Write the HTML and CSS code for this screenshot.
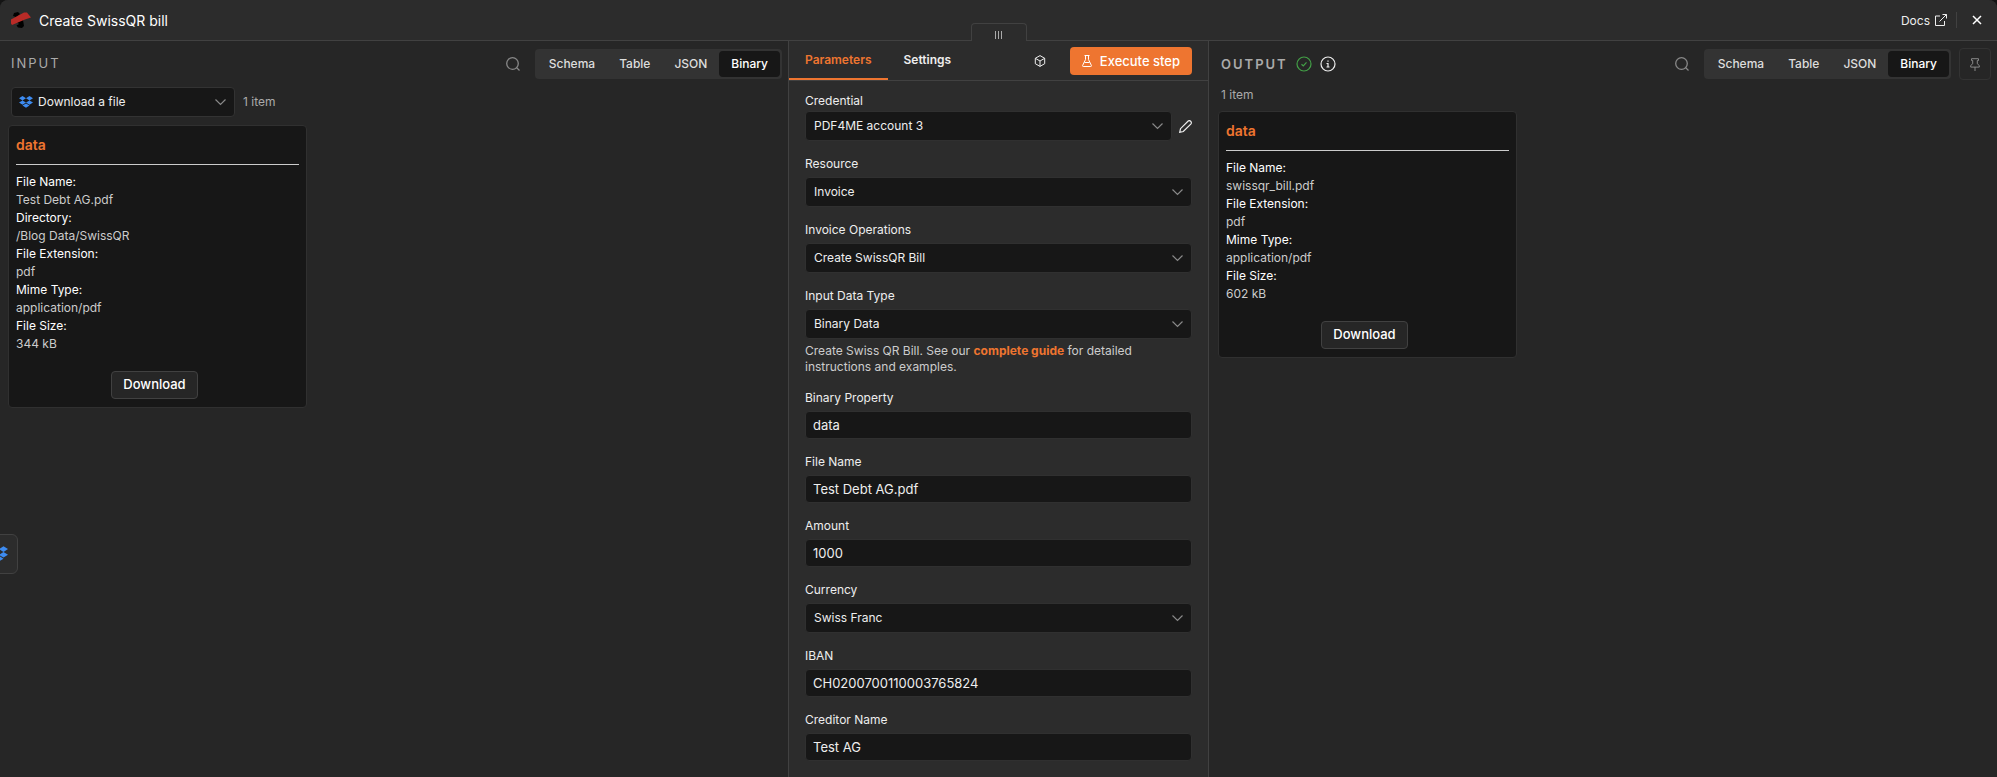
FILE: index.html
```html
<!DOCTYPE html>
<html lang="en">
<head>
    <meta charset="UTF-8">
    <meta name="viewport" content="width=device-width, initial-scale=1.0">
    <title>Create SwissQR bill</title>
    <link rel="stylesheet" href="styles.css">
</head>
<body>
    <div class="dialog">
        <header class="topbar">
            <svg class="logo" width="22" height="18" viewBox="0 0 22 18">
                <path d="M4 2l4-1 2 2-4 3-3-1zM7 11l6-2 1 6-2 2-4-.5-1.500-2L9 13z" fill="#000"/>
                <path d="M1 8.500L14 1.500h3l4 5-6 2L2 14l-1-1.500z" fill="#b92b27"/>
            </svg>
            <h1>Create SwissQR bill</h1>
            <a class="docs" href="#">Docs
                <svg width="12" height="12" viewBox="0 0 12 12" fill="none" stroke="currentColor">
                    <path d="M5 2H.5v9.500h9V7M7.500.5h4v4M11.500.5L4.500 7.500"/>
                </svg>
            </a>
            <button class="close" type="button" aria-label="Close">
                <svg width="10" height="10" viewBox="0 0 10 10" stroke="currentColor" stroke-width="1.500"><path d="M1 1l8 8M9 1L1 9"/></svg>
            </button>
            <div class="drag-handle"><span></span><span></span><span></span></div>
        </header>

        <main class="panels">
            <section class="panel">
                <div class="panel-header">
                    <h2>INPUT</h2>
                    <button class="search" type="button" aria-label="Search">
                        <svg width="14" height="14" viewBox="0 0 14 14" fill="none" stroke="currentColor" stroke-width="1.300"><circle cx="6.500" cy="6.500" r="5.800"/><path d="M10.500 10.500l3 3"/></svg>
                    </button>
                    <div class="view-tabs">
                        <button type="button">Schema</button>
                        <button type="button">Table</button>
                        <button type="button">JSON</button>
                        <button type="button" class="active">Binary</button>
                    </div>
                </div>
                <div class="source">
                    <div class="source-select">
                        <svg width="14" height="12" viewBox="0 0 14 12" fill="#3d8bf0"><path d="M3.500 0L7 2.200 3.500 4.400 0 2.200zM10.500 0L14 2.200l-3.500 2.200L7 2.200zM0 6.600l3.500-2.200L7 6.600 3.500 8.800zM10.500 4.400L14 6.600l-3.500 2.200L7 6.600zM3.500 9.600L7 7.400l3.500 2.200L7 11.800z"/></svg>
                        <select class="control" aria-label="Input node"><option>Download a file</option></select>
                    </div>
                    <span class="count">1 item</span>
                </div>
                <article class="card">
                    <h3>data</h3>
                    <dl>
                        <dt>File Name:</dt>
                        <dd>Test Debt AG.pdf</dd>
                        <dt>Directory:</dt>
                        <dd>/Blog Data/SwissQR</dd>
                        <dt>File Extension:</dt>
                        <dd>pdf</dd>
                        <dt>Mime Type:</dt>
                        <dd>application/pdf</dd>
                        <dt>File Size:</dt>
                        <dd>344 kB</dd>
                    </dl>
                    <div class="card-footer">
                        <button class="download" type="button">Download</button>
                    </div>
                </article>
                <button class="floating-node" type="button" aria-label="Download a file">
                    <svg width="18" height="16" viewBox="0 0 14 12" fill="#3d8bf0"><path d="M3.500 0L7 2.200 3.500 4.400 0 2.200zM10.500 0L14 2.200l-3.500 2.200L7 2.200zM0 6.600l3.500-2.200L7 6.600 3.500 8.800zM10.500 4.400L14 6.600l-3.500 2.200L7 6.600zM3.500 9.600L7 7.400l3.500 2.200L7 11.800z"/></svg>
                </button>
            </section>

            <section class="settings">
                <nav class="settings-tabs">
                    <a class="active" href="#">Parameters</a>
                    <a href="#">Settings</a>
                    <button class="cube" type="button" aria-label="Node version">
                        <svg width="12" height="12" viewBox="0 0 12 12" fill="none" stroke="currentColor"><path d="M6 .6l4.700 2.700v5.400L6 11.400 1.300 8.700V3.300zM1.300 3.300L6 6l4.700-2.700M6 6v5.400"/></svg>
                    </button>
                    <button class="execute" type="button">
                        <svg width="10" height="12" viewBox="0 0 10 12" fill="none" stroke="currentColor"><path d="M2.500.5h5M3.500.5v4L.6 10.500c-.2.600.1 1 .6 1h7.600c.5 0 .8-.4.6-1L6.500 4.500v-4M2.500 7.500h5"/></svg>
                        Execute step
                    </button>
                </nav>
                <form class="fields">
                    <div class="field credential">
                        <label for="credential">Credential</label>
                        <div class="credential-row">
                            <select class="control" id="credential"><option>PDF4ME account 3</option></select>
                            <button type="button" class="edit" aria-label="Edit credential">
                                <svg width="13" height="13" viewBox="0 0 13 13" fill="none" stroke="currentColor" stroke-width="1.200"><path d="M.7 12.300l.8-3.600L9.200 1c1.600-1.200 4 .9 2.800 2.800L4.300 11.500z"/></svg>
                            </button>
                        </div>
                    </div>
                    <div class="field">
                        <label for="resource">Resource</label>
                        <select class="control" id="resource"><option>Invoice</option></select>
                    </div>
                    <div class="field">
                        <label for="operation">Invoice Operations</label>
                        <select class="control" id="operation"><option>Create SwissQR Bill</option></select>
                    </div>
                    <div class="field">
                        <label for="inputType">Input Data Type</label>
                        <select class="control" id="inputType"><option>Binary Data</option></select>
                        <p class="hint">Create Swiss QR Bill. See our <a href="#">complete guide</a> for detailed instructions and examples.</p>
                    </div>
                    <div class="field">
                        <label for="binaryProperty">Binary Property</label>
                        <input class="control" type="text" id="binaryProperty" value="data">
                    </div>
                    <div class="field">
                        <label for="fileName">File Name</label>
                        <input class="control" type="text" id="fileName" value="Test Debt AG.pdf">
                    </div>
                    <div class="field">
                        <label for="amount">Amount</label>
                        <input class="control" type="text" id="amount" value="1000">
                    </div>
                    <div class="field">
                        <label for="currency">Currency</label>
                        <select class="control" id="currency"><option>Swiss Franc</option></select>
                    </div>
                    <div class="field">
                        <label for="iban">IBAN</label>
                        <input class="control" type="text" id="iban" value="CH0200700110003765824">
                    </div>
                    <div class="field">
                        <label for="creditor">Creditor Name</label>
                        <input class="control" type="text" id="creditor" value="Test AG">
                    </div>
                </form>
            </section>

            <section class="panel output">
                <div class="panel-header">
                    <h2>OUTPUT</h2>
                    <svg class="success" width="16" height="16" viewBox="0 0 16 16" fill="none" stroke="currentColor" stroke-width="1.200"><circle cx="8" cy="8" r="7"/><path d="M5.500 8.200l1.800 1.700 3.200-3.500"/></svg>
                    <svg class="info" width="16" height="16" viewBox="0 0 16 16" fill="none" stroke="currentColor" stroke-width="1.200"><circle cx="8" cy="8" r="7"/><path d="M6.500 7.500H8v3.500M6.500 11h3M8 4.500v1.300"/></svg>
                    <button class="search" type="button" aria-label="Search">
                        <svg width="14" height="14" viewBox="0 0 14 14" fill="none" stroke="currentColor" stroke-width="1.300"><circle cx="6.500" cy="6.500" r="5.800"/><path d="M10.500 10.500l3 3"/></svg>
                    </button>
                    <div class="view-tabs">
                        <button type="button">Schema</button>
                        <button type="button">Table</button>
                        <button type="button">JSON</button>
                        <button type="button" class="active">Binary</button>
                    </div>
                    <button class="pin" type="button" aria-label="Pin data">
                        <svg width="10" height="13" viewBox="0 0 10 13" fill="none" stroke="currentColor"><path d="M1.500.7h7v1.800H7.300v3.300L9.300 7.500v1.600H.7V7.500l2-1.700V2.500H1.500zM5 9v4"/></svg>
                    </button>
                </div>
                <span class="count">1 item</span>
                <article class="card">
                    <h3>data</h3>
                    <dl>
                        <dt>File Name:</dt>
                        <dd>swissqr_bill.pdf</dd>
                        <dt>File Extension:</dt>
                        <dd>pdf</dd>
                        <dt>Mime Type:</dt>
                        <dd>application/pdf</dd>
                        <dt>File Size:</dt>
                        <dd>602 kB</dd>
                    </dl>
                    <div class="card-footer">
                        <button class="download" type="button">Download</button>
                    </div>
                </article>
            </section>
        </main>
    </div>
</body>
</html>
```
FILE: styles.css
```css
* {
    box-sizing: border-box;
}
body {
    margin: 0;
    background-color: #141414;
    color: #eee;
    font-family: Inter, sans-serif;
    font-size: 12px;
}
h1, h2, h3, p, dl, dd {
    margin: 0;
}
button, input, select {
    font-family: inherit;
    color: inherit;
}
button {
    display: flex;
    align-items: center;
    justify-content: center;
    padding: 0;
    border: none;
    background: none;
    cursor: pointer;
}
a {
    color: inherit;
    text-decoration: none;
}
.dialog {
    display: flex;
    flex-direction: column;
    height: 100vh;
    overflow: hidden;
    border-radius: 8px 8px 0 0;
    background-color: #262626;
}

/* Top bar */
.topbar {
    position: relative;
    display: flex;
    align-items: center;
    height: 41px;
    flex: none;
    padding: 0 12px 0 10px;
    background-color: #2c2c2c;
    border-bottom: 1px solid #414141;
}
.topbar h1 {
    margin-left: 7px;
    padding-top: 2px;
    font-size: 14px;
    font-weight: 400;
    line-height: 20px;
    color: #fff;
}
.docs {
    display: flex;
    align-items: center;
    gap: 5px;
    height: 16px;
    margin-left: auto;
    padding-right: 9px;
    border-right: 1px solid #414141;
}
.close {
    width: 16px;
    height: 16px;
    margin-left: 12px;
    color: #fff;
}
.drag-handle {
    position: absolute;
    left: 50%;
    bottom: -1px;
    display: flex;
    justify-content: center;
    gap: 2px;
    width: 56px;
    height: 18px;
    margin-left: -28px;
    padding-top: 7px;
    border: 1px solid #414141;
    border-bottom: none;
    border-radius: 4px 4px 0 0;
    background-color: #2c2c2c;
}
.drag-handle span {
    width: 1px;
    height: 8px;
    background-color: #aaa;
}

/* Panels */
.panels {
    display: grid;
    grid-template-columns: 1fr 421px 1fr;
    flex: 1;
    min-height: 0;
}
.panel {
    position: relative;
    min-width: 0;
}
.panel-header {
    display: flex;
    align-items: center;
    height: 30px;
    margin-top: 8px;
    padding: 0 6px 0 11px;
}
.panel-header h2 {
    padding-bottom: 2px;
    font-size: 13px;
    font-weight: 400;
    letter-spacing: 2px;
    color: #aaa;
}
.output .panel-header {
    padding-left: 12px;
}
.output .panel-header h2 {
    padding-bottom: 0;
    font-weight: 600;
}
.search {
    margin-left: auto;
    margin-right: 15px;
    color: #888;
}
.success {
    margin-left: 8px;
    color: #43a047;
}
.info {
    margin-left: 8px;
    color: #eee;
}
.view-tabs {
    display: flex;
    padding: 2px;
    border-radius: 4px;
    background-color: #333;
}
.view-tabs button {
    height: 26px;
    padding: 0 12px 2px;
    border-radius: 4px;
    font-size: 12px;
    font-weight: 500;
    color: #ddd;
}
.view-tabs .active {
    background-color: #171717;
    color: #fff;
}
.pin {
    width: 32px;
    height: 32px;
    margin-left: 8px;
    border: 1px solid #333;
    border-radius: 4px;
    color: #888;
}
.source {
    display: flex;
    align-items: center;
    gap: 8px;
    margin: 8px 11px;
}
.source-select {
    position: relative;
    width: 224px;
}
.source-select svg {
    position: absolute;
    left: 8px;
    top: 9px;
}
.source-select .control {
    padding-left: 26px;
    border-color: #333;
}
.count {
    font-size: 12px;
    line-height: 16px;
    color: #aaa;
}
.output .count {
    display: block;
    margin: 8px 12px;
}
.card {
    width: 299px;
    margin-left: 8px;
    padding: 8px 7px;
    border: 1px solid #303030;
    border-radius: 4px;
    background-color: #171717;
}
.output .card {
    margin-left: 9px;
}
.card h3 {
    padding: 0 0 8px;
    border-bottom: 1px solid #ccc;
    font-size: 14px;
    font-weight: 600;
    line-height: 22px;
    color: #ee7530;
}
.card dl {
    padding: 8px 0 18px;
    line-height: 18px;
}
.card dt {
    color: #fff;
}
.card dd {
    color: #ccc;
}
.card-footer {
    display: flex;
    justify-content: center;
    padding-right: 6px;
}
.download {
    height: 28px;
    padding: 0 11px 2px;
    border: 1px solid #414141;
    border-radius: 4px;
    background-color: #262626;
    font-size: 13px;
    font-weight: 500;
    color: #fff;
}
.floating-node {
    position: absolute;
    left: -22px;
    top: 493px;
    width: 40px;
    height: 40px;
    padding-left: 2px;
    border: 1px solid #414141;
    border-radius: 6px;
    background-color: #2c2c2c;
}

/* Node settings */
.settings {
    border: solid #414141;
    border-width: 0 1px;
    background-color: #2c2c2c;
}
.settings-tabs {
    display: flex;
    align-items: center;
    height: 40px;
    padding-right: 16px;
    border-bottom: 1px solid #414141;
    font-weight: 600;
}
.settings-tabs a {
    padding: 0 16px;
    line-height: 37px;
    border-bottom: 2px solid transparent;
}
.settings-tabs .active {
    border-color: #ee7530;
    color: #ee7530;
}
.cube {
    margin-left: auto;
}
.execute {
    gap: 8px;
    height: 28px;
    margin-left: 24px;
    padding: 0 12px;
    border-radius: 4px;
    background-color: #ee7530;
    font-size: 13px;
    font-weight: 500;
    color: #fff;
}
.fields {
    padding: 12px 16px 0;
}
.field {
    margin-bottom: 15px;
}
.field label {
    display: block;
    margin-bottom: 5px;
    line-height: 16px;
}
.credential label {
    margin-bottom: 2px;
}
.control {
    display: block;
    width: 100%;
    border: 1px solid #303030;
    border-radius: 4px;
    outline: none;
    background-color: #171717;
}
input.control {
    height: 28px;
    padding: 0 7px;
    font-size: 13px;
}
select.control {
    height: 30px;
    padding: 0 8px 2px;
    appearance: none;
    background-image: url("data:image/svg+xml,%3Csvg xmlns='http://www.w3.org/2000/svg' width='11' height='7' fill='none' stroke='%23888' stroke-width='1.200'%3E%3Cpath d='M.5.5l5 5 5-5'/%3E%3C/svg%3E");
    background-repeat: no-repeat;
    background-position: right 8px center;
    font-size: 12px;
}
.credential-row {
    display: flex;
    align-items: center;
    gap: 7px;
}
.hint {
    margin-top: 4px;
    line-height: 16px;
    color: #ccc;
}
.hint a {
    font-weight: 700;
    color: #ee7530;
}
```
